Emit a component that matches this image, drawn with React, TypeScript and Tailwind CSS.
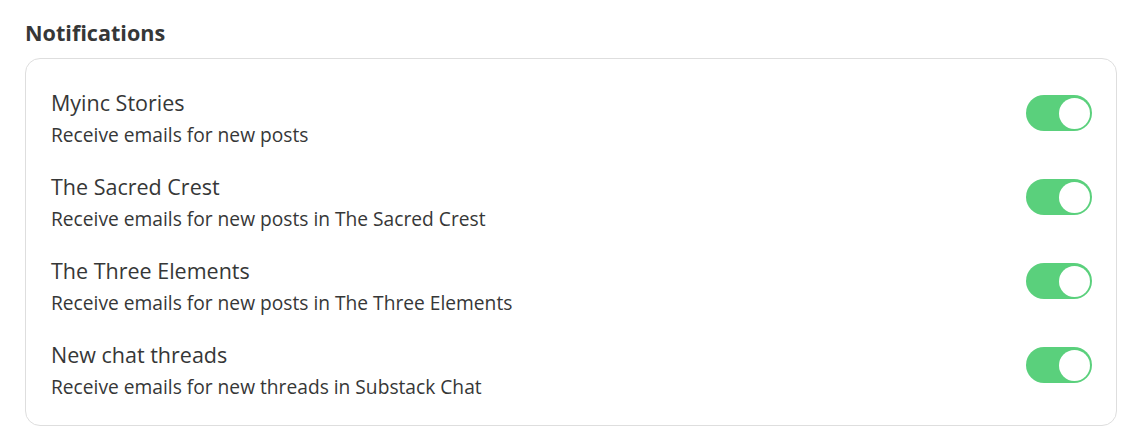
const rows = [
  { title: 'Myinc Stories', desc: 'Receive emails for new posts' },
  { title: 'The Sacred Crest', desc: 'Receive emails for new posts in The Sacred Crest' },
  { title: 'The Three Elements', desc: 'Receive emails for new posts in The Three Elements' },
  { title: 'New chat threads', desc: 'Receive emails for new threads in Substack Chat' },
];

function Toggle() {
  return (
    <div className="flex h-[36px] w-[66px] items-center justify-end rounded-full bg-[#5ad07c] px-[2px]">
      <div className="h-[31px] w-[31px] rounded-full bg-white" />
    </div>
  );
}

export default function App() {
  return (
    <div className="h-[442px] w-[1131px] bg-white px-[25px] pt-[18px] font-['Open_Sans',sans-serif] text-[#363737]">
      <h2 className="text-[21.6px] font-bold leading-[30px]">Notifications</h2>
      <div className="mt-[10px] flex h-[368px] w-[1092px] flex-col rounded-[15px] border border-[#dedede] pl-[25px] pr-[24px] pt-[30px]">
        {rows.map((r) => (
          <div key={r.title} className="flex h-[84px] items-start justify-between">
            <div>
              <div className="text-[21.5px] leading-[28px]">{r.title}</div>
              <div className="mt-[6px] text-[19.2px] leading-[24px]">{r.desc}</div>
            </div>
            <div className="mt-[6px]">
              <Toggle />
            </div>
          </div>
        ))}
      </div>
    </div>
  );
}
